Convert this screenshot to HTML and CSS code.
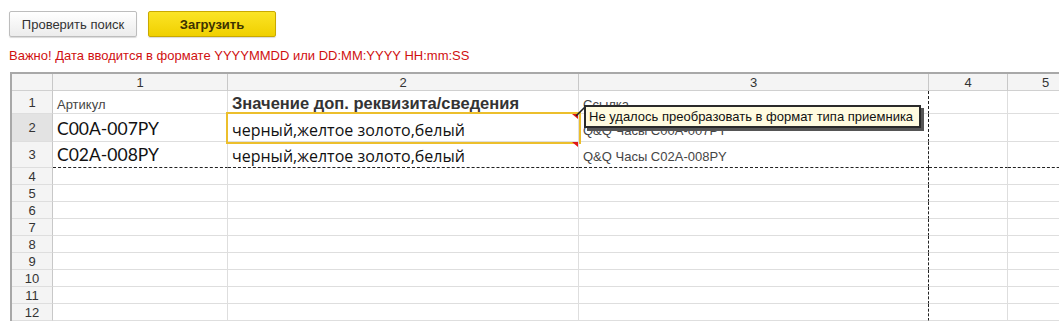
FILE: index.html
```html
<!DOCTYPE html>
<html lang="ru">

<head>
    <meta charset="UTF-8">
    <title>Загрузка</title>
    <link rel="stylesheet" href="styles.css">
</head>

<body>
    <!-- Buttons -->
    <div class="toolbar">
        <button class="btn">Проверить поиск</button>
        <button class="btn btn-main">Загрузить</button>
    </div>

    <div class="warning">Важно! Дата вводится в формате YYYYMMDD или DD:MM:YYYY HH:mm:SS</div>

    <!-- Spreadsheet -->
    <div class="sheet">
        <!-- column headers -->
        <div class="cell head"></div>
        <div class="cell head">1</div>
        <div class="cell head">2</div>
        <div class="cell head">3</div>
        <div class="cell head">4</div>
        <div class="cell head">5</div>
        <div class="cell head"></div>

        <!-- row 1 -->
        <div class="cell num">1</div>
        <div class="cell small">Артикул</div>
        <div class="cell bold">Значение доп. реквизита/сведения</div>
        <div class="cell small brk">Ссылка</div>
        <div class="cell"></div>
        <div class="cell"></div>
        <div class="cell"></div>

        <!-- row 2 -->
        <div class="cell num sel">2</div>
        <div class="cell big">C00A-007PY</div>
        <div class="cell value current">
            черный,желтое золото,белый
            <span class="mark"></span>
            <svg class="pointer" width="12" height="11" viewBox="0 0 12 11"><line x1="1" y1="10" x2="10" y2="1" stroke="#222" stroke-width="1.6"/></svg>
            <div class="tip">Не удалось преобразовать в формат типа приемника</div>
        </div>
        <div class="cell small low brk">Q&amp;Q Часы C00A-007PY</div>
        <div class="cell"></div>
        <div class="cell"></div>
        <div class="cell"></div>

        <!-- row 3 -->
        <div class="cell num">3</div>
        <div class="cell big cut">C02A-008PY</div>
        <div class="cell value cut">черный,желтое золото,белый<span class="mark"></span></div>
        <div class="cell small low brk cut">Q&amp;Q Часы C02A-008PY</div>
        <div class="cell cut"></div>
        <div class="cell cut"></div>
        <div class="cell cut"></div>

        <div class="cell num">4</div><div class="cell"></div><div class="cell"></div><div class="cell brk"></div><div class="cell"></div><div class="cell"></div><div class="cell"></div>
        <div class="cell num">5</div><div class="cell"></div><div class="cell"></div><div class="cell brk"></div><div class="cell"></div><div class="cell"></div><div class="cell"></div>
        <div class="cell num">6</div><div class="cell"></div><div class="cell"></div><div class="cell brk"></div><div class="cell"></div><div class="cell"></div><div class="cell"></div>
        <div class="cell num">7</div><div class="cell"></div><div class="cell"></div><div class="cell brk"></div><div class="cell"></div><div class="cell"></div><div class="cell"></div>
        <div class="cell num">8</div><div class="cell"></div><div class="cell"></div><div class="cell brk"></div><div class="cell"></div><div class="cell"></div><div class="cell"></div>
        <div class="cell num">9</div><div class="cell"></div><div class="cell"></div><div class="cell brk"></div><div class="cell"></div><div class="cell"></div><div class="cell"></div>
        <div class="cell num">10</div><div class="cell"></div><div class="cell"></div><div class="cell brk"></div><div class="cell"></div><div class="cell"></div><div class="cell"></div>
        <div class="cell num">11</div><div class="cell"></div><div class="cell"></div><div class="cell brk"></div><div class="cell"></div><div class="cell"></div><div class="cell"></div>
        <div class="cell num">12</div><div class="cell"></div><div class="cell"></div><div class="cell brk"></div><div class="cell"></div><div class="cell"></div><div class="cell"></div>
    </div>
</body>

</html>
```

FILE: styles.css
```css
body {
    margin: 0;
    overflow: hidden;
    background: #fff;
    font-family: Arial, "Liberation Sans", sans-serif;
    color: #333;
}

.toolbar {
    display: flex;
    gap: 11px;
    padding: 11px 0 0 9px;
}

.btn {
    width: 128px;
    height: 26px;
    padding: 0;
    border: 1px solid #bdbdbd;
    border-radius: 2px;
    background: linear-gradient(#ffffff, #ececec);
    box-shadow: 0 1px 1px rgba(0, 0, 0, 0.15);
    font-family: Arial, "Liberation Sans", sans-serif;
    font-size: 13px;
    color: #333;
}

.btn-main {
    border-color: #c9a900;
    background: linear-gradient(#fbe426, #f0d000);
    font-weight: bold;
    color: #3d3200;
}

.warning {
    padding: 11px 0 0 9px;
    font-size: 13px;
    line-height: 15px;
    color: #d01010;
}

/* grid */
.sheet {
    display: grid;
    grid-template-columns: 41px 175px 351px 350px 79px 76px 100px;
    grid-template-rows: 17px 23px 28px 26px repeat(9, 17px);
    width: max-content;
    margin: 9px 0 0 10px;
    border-left: 2px solid #a8a8a8;
    border-top: 2px solid #a8a8a8;
}

.cell {
    box-sizing: border-box;
    display: flex;
    align-items: flex-end;
    padding: 0 0 1px 4px;
    border-right: 1px solid #dedede;
    border-bottom: 1px solid #dedede;
    font-size: 13px;
    line-height: 15px;
    white-space: nowrap;
    color: #333;
}

.cell.head {
    align-items: center;
    justify-content: center;
    padding: 0;
    background: #f4f4f4;
    border-right-color: #c8c8c8;
    border-bottom-color: #d0d0d0;
}

.cell.num {
    align-items: center;
    justify-content: center;
    padding: 0;
    background: #f4f4f4;
    border-right-color: #c8c8c8;
}

.cell.num.sel {
    background: #e3e3e3;
}

.small {
    color: #454545;
}

.small.low {
    padding-bottom: 3px;
}

.bold {
    font-size: 16.5px;
    line-height: 18px;
    font-weight: bold;
    color: #333;
}

.big {
    padding-bottom: 2px;
    font-family: Lato, "Open Sans", sans-serif;
    font-size: 17.5px;
    line-height: 20px;
    color: #111;
}

.value {
    position: relative;
    font-family: "Open Sans", Lato, sans-serif;
    font-size: 16px;
    line-height: 20px;
    color: #111;
}

.current {
    outline: 2px solid #ecbf2c;
}

/* page break lines */
.cell.cut {
    border-bottom: 1px dashed #222;
}

.cell.brk {
    border-right: 1px dashed #222;
}

/* error marker and hint */
.mark {
    position: absolute;
    top: 0;
    right: 0;
    width: 0;
    height: 0;
    border-top: 5px solid #e01818;
    border-left: 6px solid transparent;
}

.pointer {
    position: absolute;
    top: -8px;
    right: -9px;
    z-index: 2;
}

.tip {
    position: absolute;
    top: -9px;
    left: 356px;
    z-index: 3;
    padding: 2px 6px 2px 3px;
    background: #fffbe0;
    border: 2px solid #2a2a2a;
    box-shadow: 3px 3px 0 #555;
    font-family: Arial, "Liberation Sans", sans-serif;
    font-size: 13px;
    line-height: 15px;
    color: #111;
}
```
